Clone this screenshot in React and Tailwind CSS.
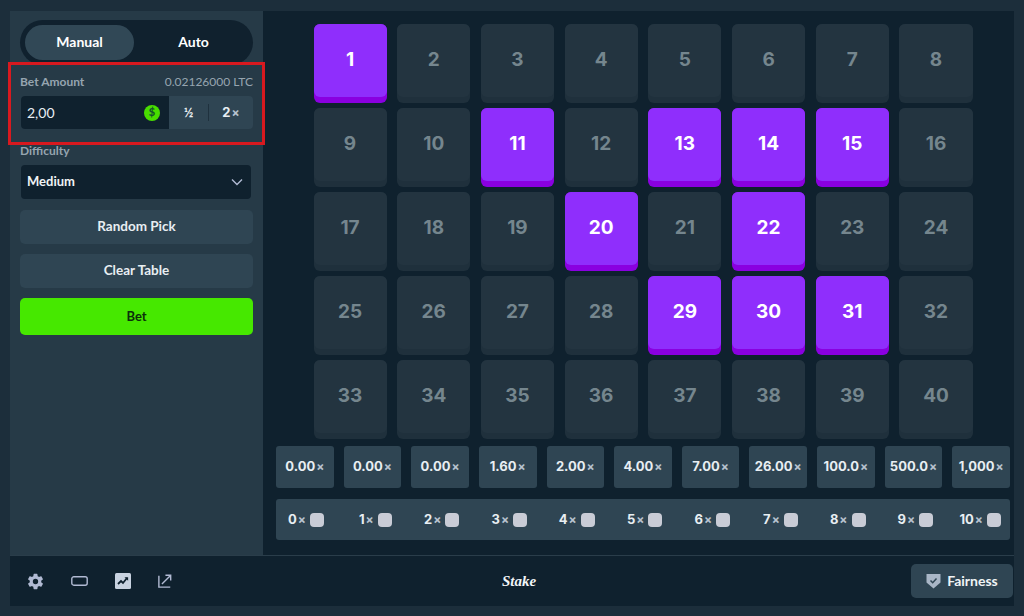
import React from "react";
import { IoSettingsSharp } from "react-icons/io5";

const PICKED = [1, 11, 13, 14, 15, 20, 22, 29, 30, 31];
const PAYOUTS = ["0.00", "0.00", "0.00", "1.60", "2.00", "4.00", "7.00", "26.00", "100.0", "500.0", "1,000"];
const HITS = [0, 1, 2, 3, 4, 5, 6, 7, 8, 9, 10];

function Times() {
  return <span className="text-[12px] font-bold text-[#b9c3d0] ml-px">×</span>;
}

function Tile({ n }) {
  const picked = PICKED.includes(n);
  return (
    <div
      className={
        picked
          ? "h-[79px] rounded-[6px] bg-[#8a00e0] pb-[6px]"
          : "h-[79px] rounded-[6px] bg-[#1f303c] pb-[6px]"
      }
    >
      <div
        className={
          picked
            ? "h-full rounded-[6px] bg-[#8f2efc] flex items-center justify-center font-['Inter',sans-serif] text-[19px] font-bold text-white"
            : "h-full rounded-[6px] bg-[#233440] flex items-center justify-center font-['Inter',sans-serif] text-[19px] font-bold text-[#75868e]"
        }
      >
        {n}
      </div>
    </div>
  );
}

function Side({ children }) {
  return (
    <div className="h-[34px] pb-px rounded-[5px] bg-[#2f4553] flex items-center justify-center text-[13.5px] font-bold text-[#e8eef2]">
      {children}
    </div>
  );
}

export default function App() {
  return (
    <div className="w-[1024px] h-[616px] bg-[#1c2e3b] pt-[11px] pr-[10px] pb-[10px] pl-[10px] font-['Lato','Liberation_Sans',sans-serif] overflow-hidden">
      <div className="flex h-[544px]">
        <aside className="relative w-[253px] shrink-0 bg-[#263a47] px-[10px] pt-[9px]">
          <div className="h-[45px] rounded-full bg-[#10212e] p-[5px] flex items-stretch text-[14px] font-bold text-white">
            <div className="w-[109px] pb-[2px] rounded-full bg-[#314856] flex items-center justify-center">Manual</div>
            <div className="flex-1 pb-[2px] flex items-center justify-center pl-[5px]">Auto</div>
          </div>

          {/* red highlight drawn on the screenshot */}
          <div className="absolute left-[-2px] top-[51px] w-[257px] h-[83px] border-[3px] border-[#d8191f] pointer-events-none" />

          <div className="mt-[10px] flex justify-between items-center h-[14px] text-[12px] font-bold text-[#96a5b0]">
            <span>Bet Amount</span>
            <span className="font-normal">0.02126000 LTC</span>
          </div>
          <div className="mt-[7px] ml-px h-[33px] rounded-[4px] bg-[#2f4553] flex">
            <div className="w-[148px] rounded-l-[4px] bg-[#0f212e] flex items-center justify-between pl-[6px] pr-[9px] text-[14px] text-[#e8eef2]">
              <span>2,00</span>
              <span className="w-4 h-4 rounded-full bg-[#48dd00] flex items-center justify-center text-[11px] font-black text-[#14532d]">$</span>
            </div>
            <div className="w-[39px] flex items-center justify-center text-[13px] font-bold text-[#e8eef2]">½</div>
            <div className="w-px h-[17px] self-center bg-[#1f313e]" />
            <div className="flex-1 flex items-center justify-center font-['Inter',sans-serif] text-[13px] font-bold text-[#e8eef2]">
              2<Times />
            </div>
          </div>

          <div className="mt-[15px] h-[14px] flex items-center text-[12px] font-bold text-[#96a5b0]">Difficulty</div>
          <div className="mt-[7px] ml-px mr-[2px] h-[34px] rounded-[4px] bg-[#0f212e] flex items-center justify-between pl-[6px] pr-[8px] text-[13px] font-bold text-[#f0f4f6]">
            <span>Medium</span>
            <svg width="12" height="8" viewBox="0 0 12 8" fill="none" stroke="#b1bad3" strokeWidth="1.4">
              <path d="M1 1.5l5 5 5-5" />
            </svg>
          </div>

          <div className="mt-[11px] flex flex-col gap-[10px]">
            <Side>Random Pick</Side>
            <Side>Clear Table</Side>
            <div className="h-[37px] rounded-[5px] bg-[#46e800] flex items-center justify-center text-[13px] font-bold text-[#0b2f0b]">
              Bet
            </div>
          </div>
        </aside>

        <main className="flex-1 bg-[#0f212e] pt-[12.5px] pr-[4px] pl-[13px]">
          <div className="grid grid-cols-8 gap-x-[10.7px] gap-y-[5px] ml-[37.5px] mr-[37.5px]">
            {Array.from({ length: 40 }, (_, i) => (
              <Tile key={i} n={i + 1} />
            ))}
          </div>
          <div className="mt-[7.5px] grid grid-cols-11 gap-x-[10px]">
            {PAYOUTS.map((p, i) => (
              <div
                key={i}
                className="h-[42px] rounded-[3px] bg-[#2f4553] flex items-center justify-center font-['Inter',sans-serif] text-[13px] font-bold text-[#e8eef2]"
              >
                {p}
                <Times />
              </div>
            ))}
          </div>
          <div className="mt-[11px] h-[41px] rounded-[3px] bg-[#2f4553] grid grid-cols-[repeat(10,67.7px)_1fr]">
            {HITS.map((h) => (
              <div
                key={h}
                className="flex items-center justify-end gap-[4px] pr-[19.7px] last:pr-[9px] font-['Inter',sans-serif] text-[13px] font-bold text-[#e8eef2]"
              >
                <span>
                  {h}
                  <Times />
                </span>
                <span className="w-[14px] h-[14px] rounded-[4px] bg-[#c9ccd6]" />
              </div>
            ))}
          </div>
        </main>
      </div>

      <footer className="h-[51px] bg-[#0f212e] border-t border-[#2a3d4a] flex items-center pl-[17px] pr-[1px]">
        <div className="flex-1 flex items-center gap-[27px] text-[#b1bad3]">
          <IoSettingsSharp size={17} />
          <svg width="17" height="10" viewBox="0 0 17 10" fill="none" stroke="#b1bad3" strokeWidth="1.4">
            <rect x="0.8" y="0.8" width="15.4" height="8.4" rx="2" />
          </svg>
          <svg width="16" height="16" viewBox="0 0 16 16">
            <rect width="16" height="16" rx="1.5" fill="#c8d2e0" />
            <path d="M3 11l3-3 2 2 4-5" fill="none" stroke="#0f212e" strokeWidth="1.8" />
            <path d="M9.5 4.2h3.6v3.6z" fill="#0f212e" />
          </svg>
          <svg width="14" height="14" viewBox="0 0 16 16" fill="none" stroke="#b1bad3" strokeWidth="1.6">
            <path d="M1 2v13h13" />
            <path d="M4.5 11.5L14 2M8.5 1.5h6v6" />
          </svg>
        </div>
        <div className="ml-[-2px] font-['Liberation_Serif',serif] italic font-bold text-[15px] text-[#f2f5f7]">Stake</div>
        <div className="flex-1 flex justify-end">
          <div className="w-[102px] h-[34px] pb-px rounded-[5px] bg-[#2f4553] flex items-center justify-center gap-[6px] text-[14px] font-bold text-[#f0f4f6]">
            <svg width="15" height="16" viewBox="0 0 15 16">
              <path d="M0.5 1h14v8.5L7.5 15.5 0.5 9.5z" fill="#a9b6c6" />
              <path d="M4.5 7.5l2.2 2.2 3.8-4.2" fill="none" stroke="#2f4553" strokeWidth="1.5" />
            </svg>
            Fairness
          </div>
        </div>
      </footer>
    </div>
  );
}
